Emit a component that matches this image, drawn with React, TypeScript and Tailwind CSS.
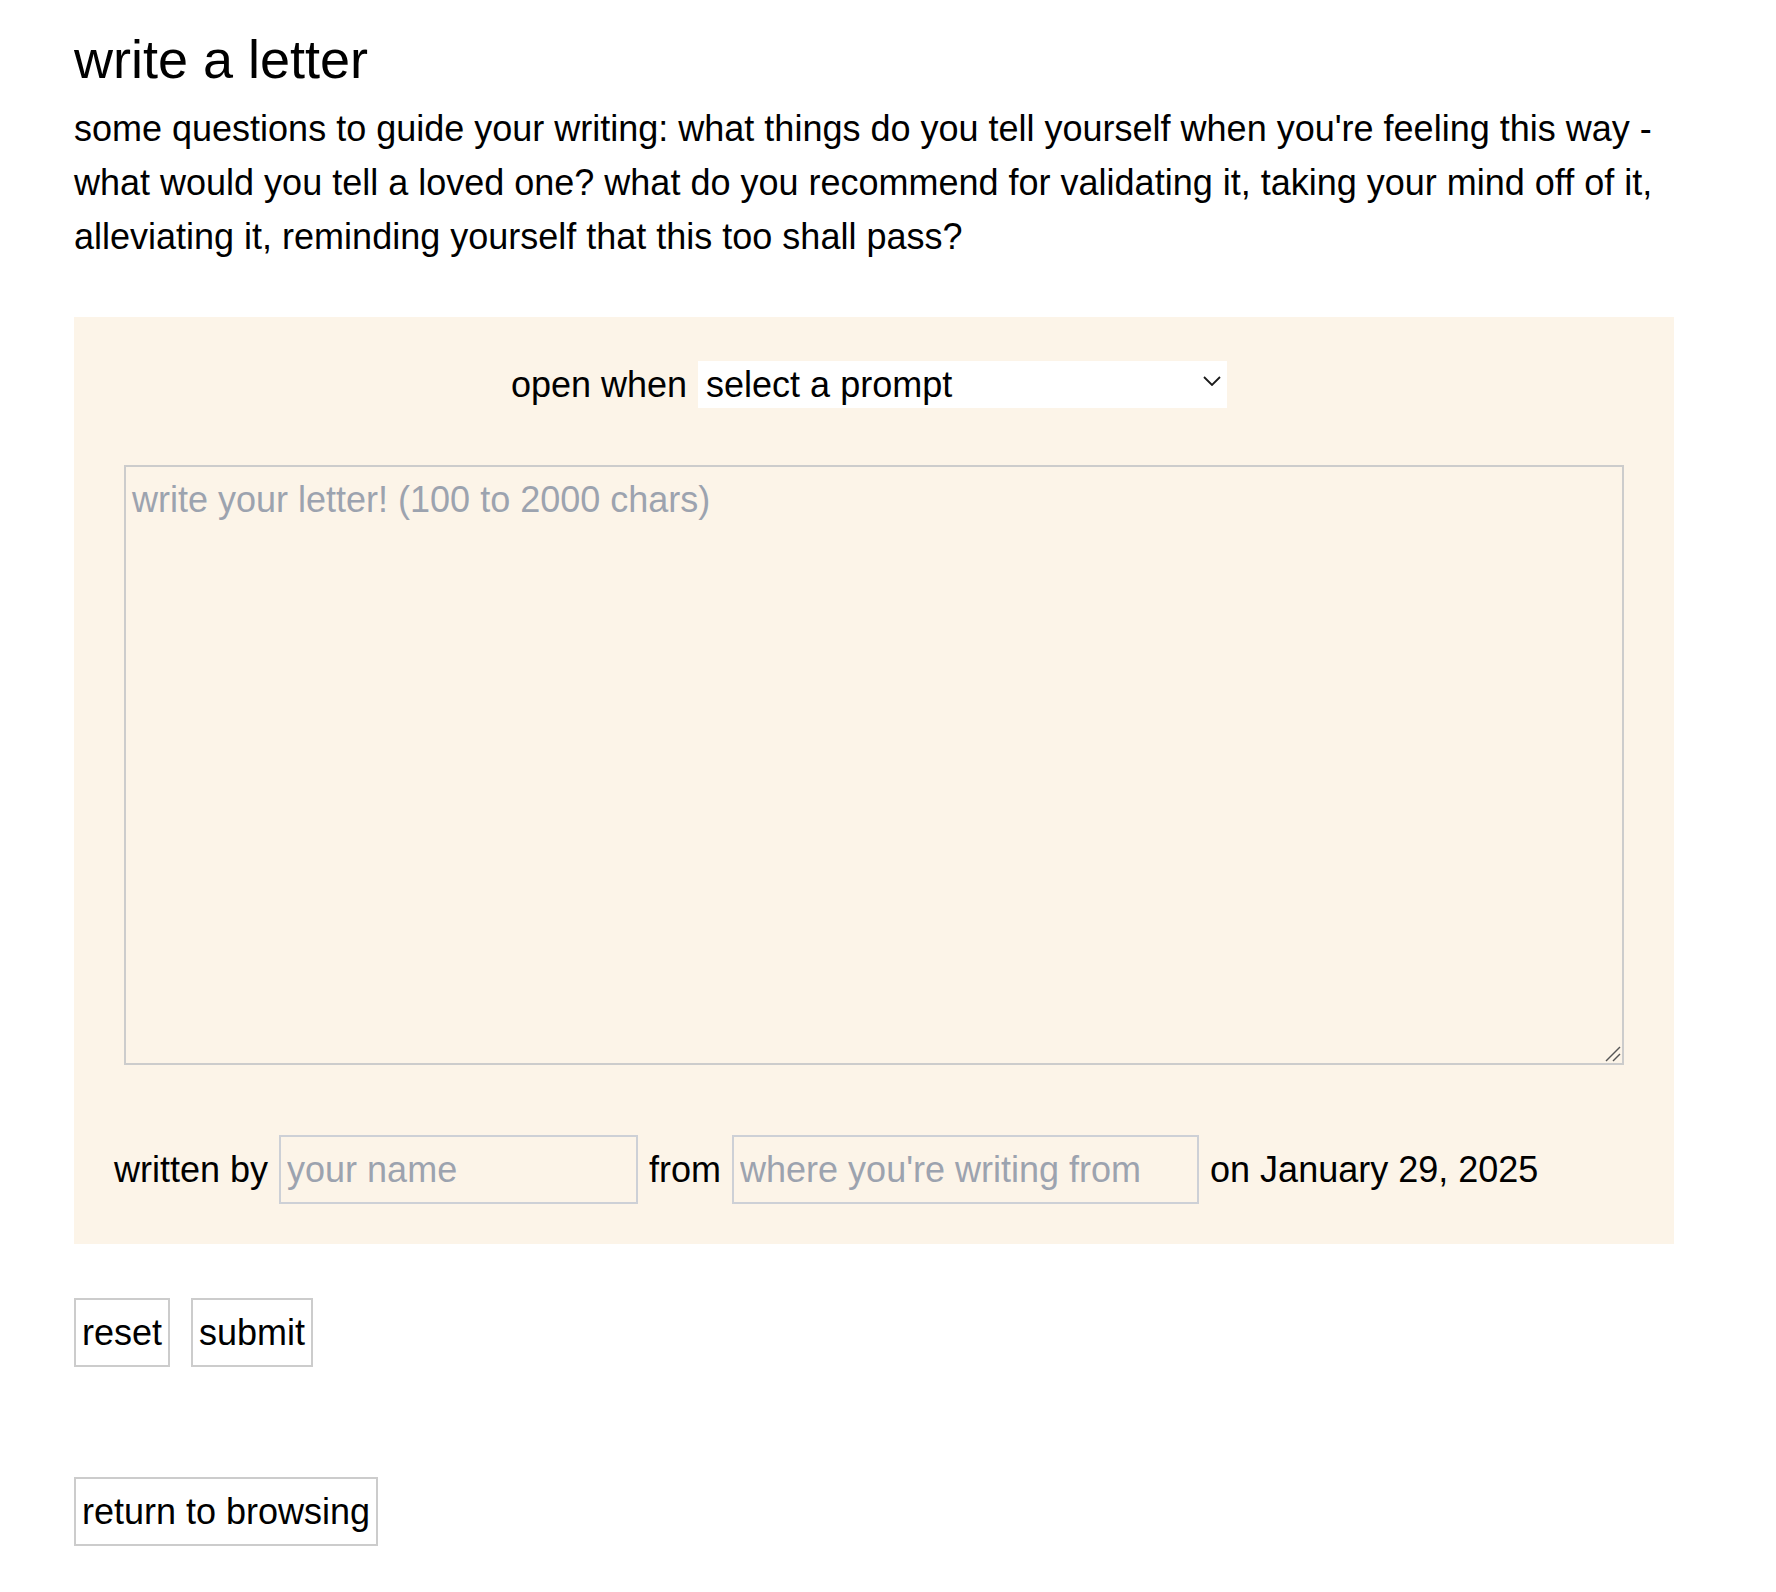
import { useState } from "react";

const font = { fontFamily: '"Liberation Sans", Arial, Helvetica, sans-serif' };

function ChevronDown() {
  return (
    <svg width="18" height="10" viewBox="0 0 18 10" fill="none" className="pointer-events-none absolute right-[6px] top-[18px]">
      <path d="M1 1 L9 9 L17 1" stroke="#1a1a1a" strokeWidth="1.8" />
    </svg>
  );
}

function ResizeGrip() {
  return (
    <svg width="16" height="16" viewBox="0 0 16 16" fill="none" className="pointer-events-none absolute bottom-[3px] right-[3px]">
      <path d="M1 15 L15 1" stroke="#555" strokeWidth="1.5" />
      <path d="M8 15 L15 8" stroke="#555" strokeWidth="1.5" />
    </svg>
  );
}

export default function App() {
  const [prompt, setPrompt] = useState("");
  const [letter, setLetter] = useState("");
  const [name, setName] = useState("");
  const [place, setPlace] = useState("");

  return (
    <div className="min-h-[1592px] bg-white text-black pl-[74px] pt-[19px]" style={font}>
      <div className="w-[1600px]">
        <h1 className="text-[54px] leading-[81px] font-normal">write a letter</h1>
        <p className="mt-[2px] text-[36px] leading-[54px]">
          some questions to guide your writing: what things do you tell yourself when you're feeling this way -
          what would you tell a loved one? what do you recommend for validating it, taking your mind off of it,
          alleviating it, reminding yourself that this too shall pass?
        </p>

        <form className="mt-[53px] bg-[#fcf4e8] px-[40px] pt-[41px] pb-[40px]" onSubmit={(e) => e.preventDefault()}>
          <div className="flex items-center justify-center gap-[11px] pr-[10px] text-[36px]">
            <span>open when</span>
            <div className="relative">
              <select
                value={prompt}
                onChange={(e) => setPrompt(e.target.value)}
                className="h-[47px] w-[529px] appearance-none bg-white pl-[8px] pr-[30px] text-[36px] leading-[47px] text-black outline-none"
                style={font}
              >
                <option value="">select a prompt</option>
                <option value="sad">you're feeling sad</option>
                <option value="anxious">you're feeling anxious</option>
                <option value="lonely">you're feeling lonely</option>
              </select>
              <ChevronDown />
            </div>
          </div>

          <div className="relative mx-auto mt-[53px] w-[1500px]">
            <textarea
              value={letter}
              onChange={(e) => setLetter(e.target.value)}
              placeholder="write your letter! (100 to 2000 chars)"
              className="block h-[600px] w-full resize-none border-[2px] border-[#cccccc] bg-transparent px-[6px] py-[6px] text-[36px] leading-[54px] outline-none placeholder:text-[#9ca3af]"
              style={font}
            />
            <ResizeGrip />
          </div>

          <div className="mt-[70px] flex items-center gap-[11px] text-[36px]">
            <span>written by</span>
            <input
              value={name}
              onChange={(e) => setName(e.target.value)}
              placeholder="your name"
              className="h-[69px] w-[359px] border-[2px] border-[#cdd0d6] bg-transparent px-[6px] text-[36px] leading-[54px] outline-none placeholder:text-[#9ca3af]"
              style={font}
            />
            <span>from</span>
            <input
              value={place}
              onChange={(e) => setPlace(e.target.value)}
              placeholder="where you're writing from"
              className="h-[69px] w-[467px] border-[2px] border-[#cdd0d6] bg-transparent px-[6px] text-[36px] leading-[54px] outline-none placeholder:text-[#9ca3af]"
              style={font}
            />
            <span>on January 29, 2025</span>
          </div>
        </form>

        <div className="mt-[54px] flex gap-[21px] text-[36px]">
          <button type="button" className="h-[69px] border-[2px] border-[#cccccc] bg-white px-[6px] leading-none" style={font}>
            reset
          </button>
          <button type="button" className="h-[69px] border-[2px] border-[#cccccc] bg-white px-[6px] leading-none" style={font}>
            submit
          </button>
        </div>

        <div className="mt-[110px] text-[36px]">
          <button type="button" className="h-[69px] border-[2px] border-[#cccccc] bg-white px-[6px] leading-none" style={font}>
            return to browsing
          </button>
        </div>
      </div>
    </div>
  );
}
